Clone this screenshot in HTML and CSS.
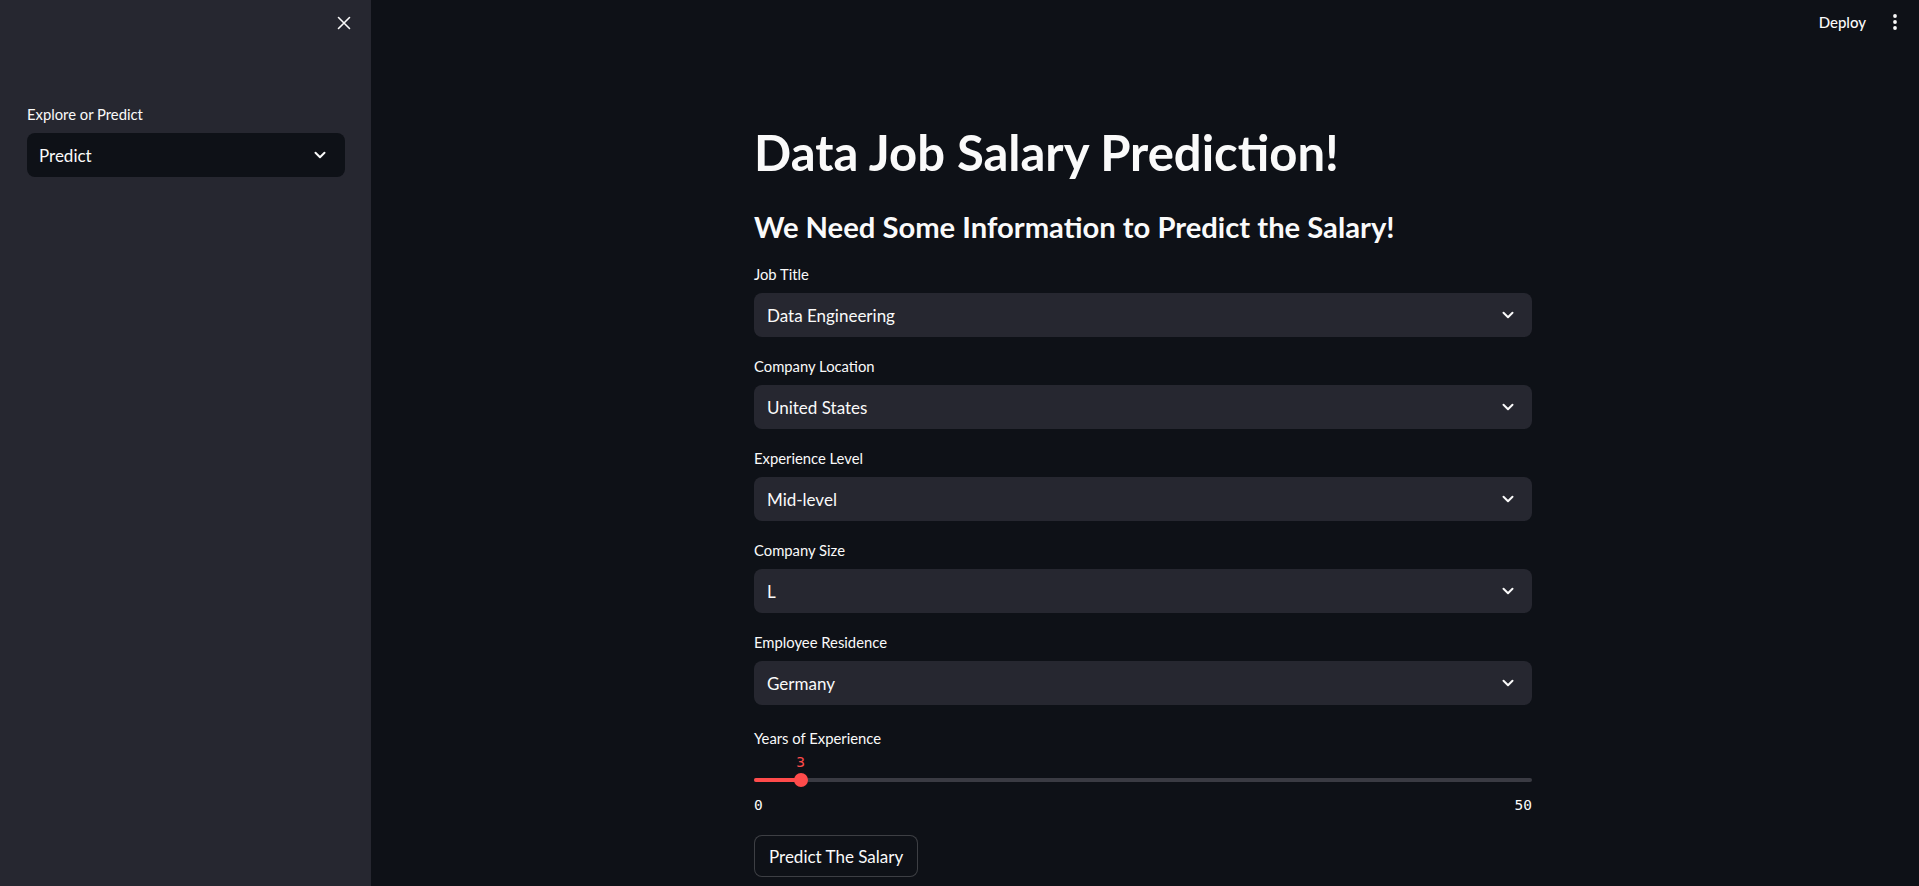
FILE: index.html
```html
<!DOCTYPE html>
<html lang="en">
<head>
<meta charset="utf-8">
<title>Data Job Salary Prediction</title>
<link rel="stylesheet" href="styles.css">
</head>
<body>
<div class="app">
  <aside class="sidebar">
    <div class="sidebar-top">
      <button class="close-btn" aria-label="Close sidebar">
        <svg width="14" height="14" viewBox="0 0 14 14"><path d="M1.5 1.5L12.5 12.5M12.5 1.5L1.5 12.5" stroke="#fafafa" stroke-width="1.6" stroke-linecap="round"/></svg>
      </button>
    </div>
    <div class="sidebar-content">
      <div class="widget">
        <div class="label">Explore or Predict</div>
        <div class="select select-dark">
          <span>Predict</span>
          <svg class="chev" width="14" height="14" viewBox="0 0 14 14"><path d="M2.5 4.8L7 9.2L11.5 4.8" fill="none" stroke="#fafafa" stroke-width="2" stroke-linecap="round" stroke-linejoin="round"/></svg>
        </div>
      </div>
    </div>
  </aside>
  <main class="main">
    <header class="topbar">
      <span class="deploy">Deploy</span>
      <svg class="menu" width="6" height="18" viewBox="0 0 6 18"><circle cx="3" cy="3" r="1.9" fill="#fafafa"/><circle cx="3" cy="9" r="1.9" fill="#fafafa"/><circle cx="3" cy="15" r="1.9" fill="#fafafa"/></svg>
    </header>
    <section class="content">
      <h1 class="title">Data Job Salary Prediction!</h1>
      <h2 class="subtitle">We Need Some Information to Predict the Salary!</h2>

      <div class="widget">
        <div class="label">Job Title</div>
        <div class="select"><span>Data Engineering</span>
          <svg class="chev" width="14" height="14" viewBox="0 0 14 14"><path d="M2.5 4.8L7 9.2L11.5 4.8" fill="none" stroke="#fafafa" stroke-width="2" stroke-linecap="round" stroke-linejoin="round"/></svg></div>
      </div>
      <div class="widget">
        <div class="label">Company Location</div>
        <div class="select"><span>United States</span>
          <svg class="chev" width="14" height="14" viewBox="0 0 14 14"><path d="M2.5 4.8L7 9.2L11.5 4.8" fill="none" stroke="#fafafa" stroke-width="2" stroke-linecap="round" stroke-linejoin="round"/></svg></div>
      </div>
      <div class="widget">
        <div class="label">Experience Level</div>
        <div class="select"><span>Mid-level</span>
          <svg class="chev" width="14" height="14" viewBox="0 0 14 14"><path d="M2.5 4.8L7 9.2L11.5 4.8" fill="none" stroke="#fafafa" stroke-width="2" stroke-linecap="round" stroke-linejoin="round"/></svg></div>
      </div>
      <div class="widget">
        <div class="label">Company Size</div>
        <div class="select"><span>L</span>
          <svg class="chev" width="14" height="14" viewBox="0 0 14 14"><path d="M2.5 4.8L7 9.2L11.5 4.8" fill="none" stroke="#fafafa" stroke-width="2" stroke-linecap="round" stroke-linejoin="round"/></svg></div>
      </div>
      <div class="widget">
        <div class="label">Employee Residence</div>
        <div class="select"><span>Germany</span>
          <svg class="chev" width="14" height="14" viewBox="0 0 14 14"><path d="M2.5 4.8L7 9.2L11.5 4.8" fill="none" stroke="#fafafa" stroke-width="2" stroke-linecap="round" stroke-linejoin="round"/></svg></div>
      </div>

      <div class="slider-widget">
        <div class="label">Years of Experience</div>
        <div class="slider">
          <div class="slider-value-row"><span class="slider-value" style="left: 6%">3</span></div>
          <div class="track">
            <div class="track-fill" style="width: 6%"></div>
            <div class="thumb" style="left: 6%"></div>
          </div>
          <div class="ticks"><span>0</span><span>50</span></div>
        </div>
      </div>

      <button class="btn">Predict The Salary</button>
    </section>
  </main>
</div>
</body>
</html>
```

FILE: styles.css
```css
* { box-sizing: border-box; }
html, body { margin: 0; padding: 0; }
body {
  font-family: "Lato", "Noto Sans", sans-serif;
  color: #fafafa;
  background: #0e1117;
}
.app {
  display: flex;
  height: 886px;
  overflow: hidden;
}
.sidebar {
  width: 371px;
  flex: 0 0 371px;
  background: #262730;
  display: flex;
  flex-direction: column;
}
.sidebar-top {
  height: 46px;
  display: flex;
  justify-content: flex-end;
  align-items: center;
  padding-right: 20px;
}
.close-btn {
  background: none;
  border: 0;
  padding: 0;
  width: 14px;
  height: 14px;
  display: flex;
}
.sidebar-content {
  padding: 58px 26px 0 27px;
}
.main {
  flex: 1;
  display: flex;
  flex-direction: column;
  padding-right: 4px;
}
.topbar {
  height: 44px;
  display: flex;
  justify-content: flex-end;
  align-items: center;
  gap: 26px;
  padding-right: 17px;
}
.deploy {
  font-size: 15px;
  font-weight: 500;
}
.menu { display: block; }
.content {
  width: 778px;
  margin: 0 auto;
  display: flex;
  flex-direction: column;
  align-items: stretch;
}
.title {
  margin: 78px 0 0;
  font-size: 49px;
  line-height: 60px;
  font-weight: 700;
}
.subtitle {
  margin: 25px 0 0;
  font-size: 29.2px;
  line-height: 40px;
  font-weight: 700;
}
.widget {
  display: flex;
  flex-direction: column;
  gap: 9px;
  margin-top: 17px;
}
.sidebar .widget { margin-top: 0; }
.subtitle + .widget { margin-top: 17px; }
.widget + .widget { margin-top: 19px; }
.label {
  font-size: 14.8px;
  line-height: 20px;
}
.select {
  height: 44px;
  border-radius: 8px;
  background: #262730;
  display: flex;
  align-items: center;
  justify-content: space-between;
  padding: 0 17px 0 13px;
  font-size: 17px;
}
.select-dark {
  background: #0e1117;
  padding: 0 18px 0 12px;
}
.chev { display: block; }
.slider-widget {
  margin-top: 23px;
}
.slider-value-row {
  position: relative;
  height: 16px;
  margin-top: 6px;
}
.slider-value {
  position: absolute;
  top: 0;
  transform: translateX(-50%);
  font-family: "DejaVu Sans Mono", "Liberation Mono", monospace;
  font-size: 14.5px;
  line-height: 16px;
  color: #ff4b4b;
}
.track {
  position: relative;
  height: 4px;
  margin-top: 8px;
  background: #3a3b43;
  border-radius: 2px;
}
.track-fill {
  height: 4px;
  background: #ff4b4b;
  border-radius: 2px;
}
.thumb {
  position: absolute;
  top: 50%;
  width: 14px;
  height: 14px;
  border-radius: 50%;
  background: #ff4b4b;
  transform: translate(-50%, -50%);
}
.ticks {
  display: flex;
  justify-content: space-between;
  margin-top: 15px;
  font-family: "DejaVu Sans Mono", "Liberation Mono", monospace;
  font-size: 14.5px;
  line-height: 16px;
}
.btn {
  align-self: flex-start;
  margin-top: 22px;
  height: 42px;
  padding: 0 14px;
  background: #0e1117;
  color: #fafafa;
  border: 1px solid rgba(250, 250, 250, 0.2);
  border-radius: 8px;
  font-family: "Lato", "Noto Sans", sans-serif;
  font-size: 17px;
}
```
